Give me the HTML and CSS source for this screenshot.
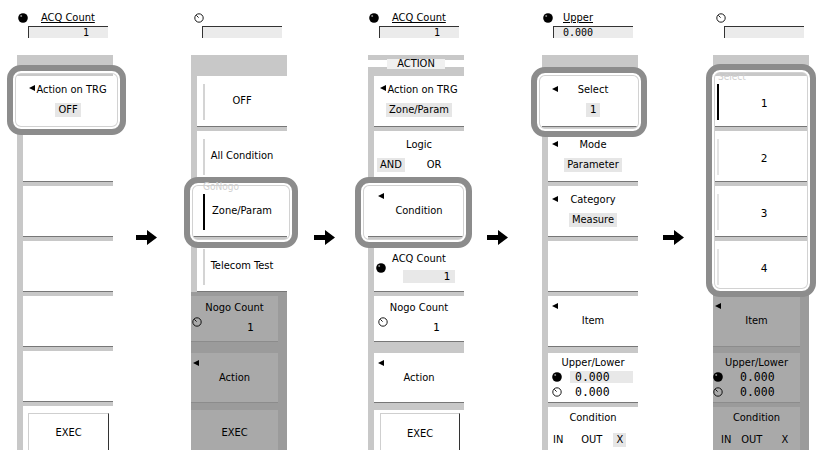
FILE: index.html
```html
<!DOCTYPE html>
<html lang="en">
<head>
<meta charset="utf-8">
<title>Softkey menus</title>
<link rel="stylesheet" href="styles.css">
</head>
<body>
<main class="stage">

  <!-- Panel 1 -->
  <section class="panel">
    <div class="jog">
      <div class="jog-head">
        <svg class="knob" viewBox="0 0 10 10"><circle cx="5" cy="5" r="4.8" fill="#000"/><circle cx="3.2" cy="3.1" r="1" fill="#8a8a8a"/></svg>
        <span class="jog-label">ACQ Count</span>
      </div>
      <div class="jog-box">1</div>
    </div>
    <div class="band"></div>
    <div class="key two sel">
      <div class="title"><i class="tri-in"></i>Action on TRG</div>
      <div class="val">OFF</div>
    </div>
    <div class="key"></div>
    <div class="key"></div>
    <div class="key"></div>
    <div class="key"></div>
    <div class="key"></div>
    <div class="key exec ex1"><div class="btn">EXEC</div></div>
    <div class="hl hl1"></div>
  </section>

  <div class="gap g1"><svg class="arrow" viewBox="0 0 21 15"><polygon points="0,5 11,5 11,0 21,7.5 11,15 11,10 0,10" fill="#000"/></svg></div>

  <!-- Panel 2 -->
  <section class="panel">
    <div class="jog">
      <div class="jog-head">
        <svg class="knob hollow" viewBox="0 0 10 10"><circle cx="5" cy="5" r="4.2" fill="#fff" stroke="#000" stroke-width="0.9"/><path d="M4.6 4.6 L2.4 2.4" stroke="#000" stroke-width="0.9"/></svg>
        <span class="jog-label"></span>
      </div>
      <div class="jog-box"></div>
    </div>
    <div class="band"></div>
    <div class="key one radio">OFF</div>
    <div class="key one radio">All Condition</div>
    <div class="key one radio on sel">Zone/Param</div>
    <div class="key one radio">Telecom Test</div>
    <div class="dimgroup">
      <div class="key gk5 nogo">
        <div class="title">Nogo Count</div>
        <div class="kv"><svg class="knob" viewBox="0 0 10 10"><circle cx="5" cy="5" r="4.2" fill="none" stroke="#000" stroke-width="0.9"/><path d="M4.6 4.6 L2.4 2.4" stroke="#000" stroke-width="0.9"/></svg><span class="num">1</span></div>
      </div>
      <div class="key one gk6"><i class="tri"></i>Action</div>
      <div class="key one gk7 plain-exec">EXEC</div>
    </div>
    <div class="hl hl2"></div>
    <span class="ghost ghost-gonogo">GoNogo</span>
  </section>

  <div class="gap g2"><svg class="arrow" viewBox="0 0 21 15"><polygon points="0,5 11,5 11,0 21,7.5 11,15 11,10 0,10" fill="#000"/></svg></div>

  <!-- Panel 3 -->
  <section class="panel">
    <div class="jog">
      <div class="jog-head">
        <svg class="knob" viewBox="0 0 10 10"><circle cx="5" cy="5" r="4.8" fill="#000"/><circle cx="3.2" cy="3.1" r="1" fill="#8a8a8a"/></svg>
        <span class="jog-label">ACQ Count</span>
      </div>
      <div class="jog-box">1</div>
    </div>
    <div class="band band-title"><div class="bar"><span>ACTION</span></div></div>
    <div class="key two">
      <div class="title"><i class="tri-in"></i>Action on TRG</div>
      <div class="val">Zone/Param</div>
    </div>
    <div class="key two">
      <div class="title">Logic</div>
      <div class="opts logic"><span class="val">AND</span><span>OR</span></div>
    </div>
    <div class="key one sel"><i class="tri"></i>Condition</div>
    <div class="key acq">
      <div class="title">ACQ Count</div>
      <div class="kv"><svg class="knob" viewBox="0 0 10 10"><circle cx="5" cy="5" r="4.8" fill="#000"/><circle cx="3.2" cy="3.1" r="1" fill="#8a8a8a"/></svg><span class="numbox">1</span></div>
    </div>
    <div class="key gk5 nogo">
      <div class="title">Nogo Count</div>
      <div class="kv"><svg class="knob" viewBox="0 0 10 10"><circle cx="5" cy="5" r="4.2" fill="#fff" stroke="#000" stroke-width="0.9"/><path d="M4.6 4.6 L2.4 2.4" stroke="#000" stroke-width="0.9"/></svg><span class="num">1</span></div>
    </div>
    <div class="key one gk6"><i class="tri"></i>Action</div>
    <div class="key exec gk7 ex3"><div class="btn">EXEC</div></div>
    <div class="hl hl3"></div>
  </section>

  <div class="gap g3"><svg class="arrow" viewBox="0 0 21 15"><polygon points="0,5 11,5 11,0 21,7.5 11,15 11,10 0,10" fill="#000"/></svg></div>

  <!-- Panel 4 -->
  <section class="panel">
    <div class="jog">
      <div class="jog-head">
        <svg class="knob" viewBox="0 0 10 10"><circle cx="5" cy="5" r="4.8" fill="#000"/><circle cx="3.2" cy="3.1" r="1" fill="#8a8a8a"/></svg>
        <span class="jog-label short">Upper</span>
      </div>
      <div class="jog-box left">0.000</div>
    </div>
    <div class="band"></div>
    <div class="key two sel">
      <i class="tri tri-title"></i>
      <div class="title">Select</div>
      <div class="val mono">1</div>
    </div>
    <div class="key two">
      <i class="tri tri-title"></i>
      <div class="title">Mode</div>
      <div class="val">Parameter</div>
    </div>
    <div class="key two">
      <i class="tri tri-title"></i>
      <div class="title">Category</div>
      <div class="val">Measure</div>
    </div>
    <div class="key"></div>
    <div class="key one mk5"><i class="tri"></i>Item</div>
    <div class="key mk6 ul">
      <div class="title">Upper/Lower</div>
      <div class="ul-row"><svg class="knob" viewBox="0 0 10 10"><circle cx="5" cy="5" r="4.8" fill="#000"/><circle cx="3.2" cy="3.1" r="1" fill="#8a8a8a"/></svg><span class="ulv box">0.000</span></div>
      <div class="ul-row"><svg class="knob" viewBox="0 0 10 10"><circle cx="5" cy="5" r="4.2" fill="#fff" stroke="#000" stroke-width="0.9"/><path d="M4.6 4.6 L2.4 2.4" stroke="#000" stroke-width="0.9"/></svg><span class="ulv">0.000</span></div>
    </div>
    <div class="key mk7 cond">
      <div class="title">Condition</div>
      <div class="opts inout"><span class="o-in">IN</span><span class="o-out">OUT</span><span class="val">X</span></div>
    </div>
    <div class="hl hl4"></div>
  </section>

  <div class="gap g4"><svg class="arrow" viewBox="0 0 21 15"><polygon points="0,5 11,5 11,0 21,7.5 11,15 11,10 0,10" fill="#000"/></svg></div>

  <!-- Panel 5 -->
  <section class="panel">
    <div class="jog">
      <div class="jog-head">
        <svg class="knob hollow" viewBox="0 0 10 10"><circle cx="5" cy="5" r="4.2" fill="#fff" stroke="#000" stroke-width="0.9"/><path d="M4.6 4.6 L2.4 2.4" stroke="#000" stroke-width="0.9"/></svg>
        <span class="jog-label"></span>
      </div>
      <div class="jog-box"></div>
    </div>
    <div class="band"></div>
    <div class="key one radio r5 on sel mono">1</div>
    <div class="key one radio r5 sel mono">2</div>
    <div class="key one radio r5 sel mono">3</div>
    <div class="key one radio r5 sel mono">4</div>
    <div class="dimgroup">
      <div class="key one mk5"><i class="tri"></i>Item</div>
      <div class="key mk6 ul">
        <div class="title">Upper/Lower</div>
        <div class="ul-row"><svg class="knob" viewBox="0 0 10 10"><circle cx="5" cy="5" r="4.8" fill="#000"/><circle cx="3.2" cy="3.1" r="1" fill="#8a8a8a"/></svg><span class="ulv">0.000</span></div>
        <div class="ul-row"><svg class="knob" viewBox="0 0 10 10"><circle cx="5" cy="5" r="4.2" fill="none" stroke="#000" stroke-width="0.9"/><path d="M4.6 4.6 L2.4 2.4" stroke="#000" stroke-width="0.9"/></svg><span class="ulv">0.000</span></div>
      </div>
      <div class="key mk7 cond">
        <div class="title">Condition</div>
        <div class="opts inout"><span class="o-in">IN</span><span class="o-out">OUT</span><span>X</span></div>
      </div>
    </div>
    <div class="hl hl5"></div>
    <span class="ghost ghost-select">Select</span>
  </section>

</main>
</body>
</html>
```

FILE: styles.css
```css
* { box-sizing: border-box; margin: 0; padding: 0; }
html, body { background: #fff; }
body {
  margin: 0;
  font-family: "DejaVu Sans Condensed", "DejaVu Sans", Verdana, sans-serif;
  font-stretch: condensed;
  font-size: 11px;
  line-height: 12px;
  color: #000;
}
i { font-style: normal; }

.stage {
  display: flex;
  width: 818px;
  height: 450px;
  overflow: hidden;
  padding-left: 17px;
}

.panel {
  position: relative;
  flex: none;
  width: 96px;
  height: 450px;
  display: flex;
  flex-direction: column;
  background: #c8c8c8;
}

.gap { flex: none; display: flex; align-items: flex-start; padding-top: 230px; }
.g1 { width: 78px; padding-left: 23px; }
.g2 { width: 81px; padding-left: 27px; }
.g3 { width: 78px; padding-left: 23px; }
.g4 { width: 75px; padding-left: 25px; }
.arrow { width: 21px; height: 15px; display: block; }

/* jog area */
.jog { flex: none; height: 55px; background: #fff; padding-top: 12px; }
.jog-head { display: flex; align-items: center; height: 12px; }
.knob { flex: none; width: 10px; height: 10px; display: block; }
.jog-head .knob { margin-left: 1px; }
.jog-head .knob.hollow { margin-left: 3px; }
.jog-label { margin-left: 13px; text-decoration: underline; }
.jog-label.short { margin-left: 10px; }
.jog-box {
  margin: 2px 0 0 11px;
  width: 80px;
  height: 12px;
  background: #ebebeb;
  border-top: 1px solid #333;
  border-left: 1px solid #333;
  font-family: "DejaVu Sans Mono", monospace;
  font-stretch: normal;
  font-size: 10px;
  line-height: 11px;
  text-align: right;
  padding-right: 19px;
}
.jog-box.left { text-align: left; padding-left: 9px; }

.band { flex: none; height: 21px; }
.band-title { padding-top: 5px; }
.bar { height: 7px; background: #fff; display: flex; justify-content: center; align-items: center; }
.bar span { background: #f0f0f0; line-height: 10px; padding: 0 10px; }

/* keys */
.key {
  position: relative;
  flex: none;
  height: 51px;
  margin-left: 6px;
  margin-bottom: 4px;
  background: #fff;
  border-bottom: 1px solid #777;
}
.key.sel { margin-left: 0; padding-left: 6px; }
.key.two { display: flex; flex-direction: column; align-items: center; padding-top: 8px; }
.key.one { display: flex; align-items: center; justify-content: center; }
.title { white-space: nowrap; }
.val { margin-top: 7px; background: #e6e6e6; padding: 1px 3px; line-height: 12px; }
.mono, .val.mono { font-family: "DejaVu Sans Mono", monospace; font-stretch: normal; }
.val.mono { padding: 1px 4px; }

.tri-in {
  display: inline-block;
  width: 0; height: 0;
  border-top: 3.5px solid transparent;
  border-bottom: 3.5px solid transparent;
  border-right: 6px solid #000;
  margin-right: 1px;
  vertical-align: 2px;
}
.tri {
  position: absolute;
  left: 4px;
  top: 7px;
  width: 0; height: 0;
  border-top: 3.5px solid transparent;
  border-bottom: 3.5px solid transparent;
  border-right: 6px solid #000;
}
.sel .tri { left: 10px; }
.tri.tri-title { top: 10px; }

.opts { display: flex; margin-top: 7px; line-height: 14px; }
.opts .val { margin-top: 0; padding: 0 3px; line-height: 14px; }
.logic { align-self: flex-start; padding-left: 3px; gap: 22px; }

/* radio group */
.radio::before {
  content: "";
  position: absolute;
  left: 6px;
  top: 8px;
  bottom: 6px;
  width: 2px;
  background: #d4d4d4;
}
.radio.sel::before { left: 12px; }
.radio.on::before { background: #000; }
.radio.r5 { padding-top: 6px; }
.radio.r5::before { left: 4px; background: #e4e4e4; }
.radio.r5.on::before { background: #000; }

/* ACQ count key */
.key.acq { display: flex; flex-direction: column; align-items: center; padding-top: 12px; }
.kv { display: flex; align-items: flex-start; align-self: stretch; }
.acq .kv .knob { margin: -2px 0 0 2px; }
.numbox {
  margin: 5px 9px 0 auto;
  width: 52px;
  background: #e8e8e8;
  line-height: 13px;
  text-align: right;
  padding-right: 5px;
  font-family: "DejaVu Sans Mono", monospace;
  font-stretch: normal;
}
.key.nogo { display: flex; flex-direction: column; align-items: center; padding-top: 6px; }
.nogo .kv .knob { margin: 3px 0 0 4px; }
.nogo .num { margin: 8px 0 0 45px; font-family: "DejaVu Sans Mono", monospace; font-stretch: normal; }

/* group specific heights */
.gk5 { height: 46px; margin-bottom: 11px; }
.gk6 { height: 50px; margin-bottom: 7px; }
.gk7 { height: 40px; margin-bottom: 0; border-bottom: none; }
.plain-exec { padding-top: 6px; }
.mk5 { height: 51px; margin-bottom: 6px; }
.mk6 { height: 50px; margin-bottom: 4px; }
.mk7 { height: 43px; margin-bottom: 0; border-bottom: none; }

/* exec */
.key.exec { height: 44px; margin-bottom: 0; border-bottom: none; }
.ex1 { padding: 7px 4px 0 5px; }
.ex3 { height: 40px; padding: 3px 4px 0 6px; }
.btn {
  height: 100%;
  border-left: 1px solid #cfcfcf;
  border-top: 1px solid #cfcfcf;
  border-right: 1px solid #333;
  text-align: center;
  padding-top: 14px;
}
.ex1 .btn { padding-top: 13px; }

/* upper / lower */
.key.ul { display: flex; flex-direction: column; padding-top: 4px; }
.ul .title { text-align: center; }
.ul-row { display: flex; align-items: center; height: 15px; }
.ul-row:first-of-type { margin-top: 1px; }
.ul-row .knob { margin-left: 4px; }
.ulv {
  margin-left: 8px;
  width: 63px;
  padding-left: 5px;
  font-family: "DejaVu Sans Mono", monospace;
  font-stretch: normal;
  font-size: 11.5px;
  line-height: 12px;
}
.ulv.box { background: #e8e8e8; }

/* condition */
.key.cond { display: flex; flex-direction: column; padding-top: 5px; }
.cond .title { text-align: center; }
.inout { margin-top: 9px; padding-left: 5px; }
.o-in { margin-right: 18px; }
.o-out { margin-right: 11px; }

/* dimmed (inactive) region */
.dimgroup {
  flex: 1;
  margin-top: -4px;
  padding-top: 4px;
  background: #9b9b9b;
  display: flex;
  flex-direction: column;
}
.dimgroup .key {
  margin-left: 0;
  margin-right: 9px;
  background: #a9a9a9;
  border-bottom-color: #8c8c8c;
}
.dimgroup .ul-row .knob { margin-left: 0; }
.dimgroup .ulv { margin-left: 12px; }
.dimgroup .inout { padding-left: 8px; }
.dimgroup .o-in { margin-right: 10px; }
.dimgroup .o-out { margin-right: 19px; }
.dimgroup .nogo .kv .knob { margin-left: 1px; }
.dimgroup .nogo .num { margin-left: 45px; }
.dimgroup .tri { left: 2px; }

/* ghost group labels */
.ghost { position: absolute; color: #cfcfcf; font-size: 10px; line-height: 10px; }
.ghost-gonogo { left: 12px; top: 182px; }
.ghost-select { left: 5px; top: 72px; }

/* highlight frames */
.hl {
  position: absolute;
  border: 6px solid #8c8c8c;
  border-radius: 14px;
  box-shadow: inset 0 0 0 2px #fff, inset 0 0 0 3px #d2d2d2;
}
.hl1 { left: -10px; top: 65px; width: 119px; height: 70px; }
.hl2 { left: -7px; top: 177px; width: 114px; height: 71px; }
.hl3 { left: -13px; top: 177px; width: 117px; height: 71px; }
.hl4 { left: -11px; top: 67px; width: 116px; height: 70px; }
.hl5 { left: -7px; top: 64px; width: 110px; height: 233px; }
```
